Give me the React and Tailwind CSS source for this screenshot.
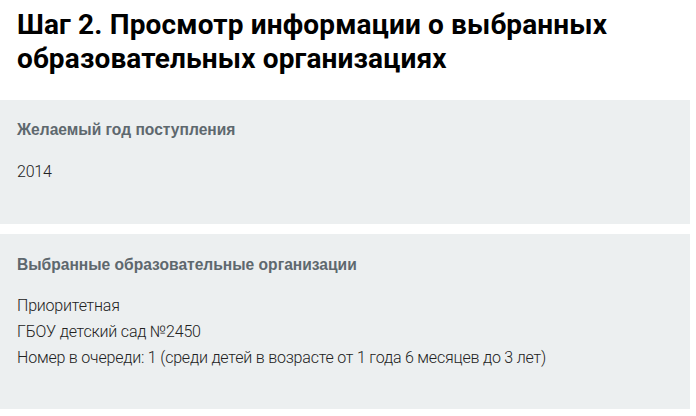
const labelCls = 'text-[15.6px] leading-[20px] font-bold text-[#5e686e] font-["Liberation_Sans",Arial,sans-serif]';
const bodyCls = 'text-[16px] leading-[26px] font-light tracking-[-0.2px] text-[#222] font-[Roboto,sans-serif]';

export default function App() {
  return (
    <div className="w-[696px] h-[416px] bg-white overflow-hidden">
      <div className="w-[690px] flex flex-col">
        <h1 className="px-[17px] pt-[8px] h-[100px] text-[28px] leading-[34px] font-bold tracking-[0.15px] text-black font-[Roboto,sans-serif]">
          Шаг 2. Просмотр информации о выбранных образовательных организациях
        </h1>
        <section className="bg-[#eceff0] h-[124px] px-[17px] pt-[20px] flex flex-col">
          <h2 className={labelCls}>Желаемый год поступления</h2>
          <p className={`mt-[19px] ${bodyCls}`}>2014</p>
        </section>
        <section className="bg-[#eceff0] h-[175px] mt-[10px] px-[17px] pt-[21px] flex flex-col">
          <h2 className={labelCls}>Выбранные образовательные организации</h2>
          <div className={`mt-[18px] flex flex-col ${bodyCls}`}>
            <p>Приоритетная</p>
            <p>ГБОУ детский сад №2450</p>
            <p>Номер в очереди: 1 (среди детей в возрасте от 1 года 6 месяцев до 3 лет)</p>
          </div>
        </section>
      </div>
    </div>
  );
}
